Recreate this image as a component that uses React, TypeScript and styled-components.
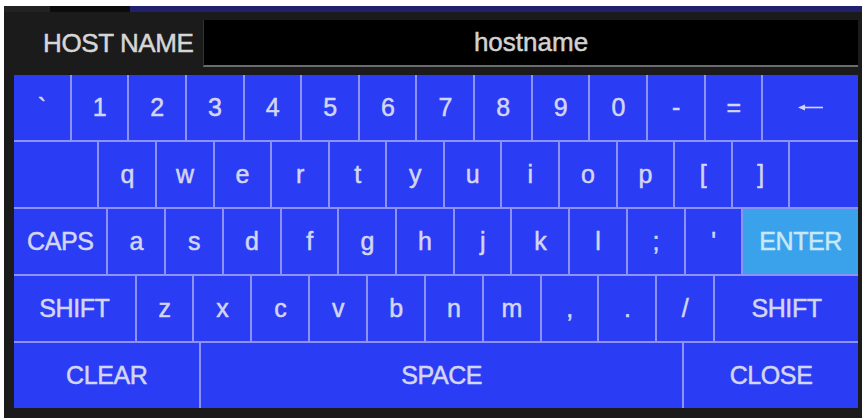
import { FC } from 'react';
import styled, { createGlobalStyle } from 'styled-components';

const COLOR = {
  FRAME: '#1b1b1b',
  KEY: '#2b3df4',
  KEY_LINE: '#8d92f6',
  KEY_TEXT: '#d3d6f2',
  ENTER: '#3aa2ea',
  ENTER_TEXT: '#c6e8f8',
};

interface KeyDef {
  label?: string;
  grow?: number;
  accent?: boolean;
  icon?: 'back';
}

const k = (label: string, grow = 1, accent = false): KeyDef => ({ label, grow, accent });

const ROWS: KeyDef[][] = [
  [
    ...['`', '1', '2', '3', '4', '5', '6', '7', '8', '9', '0', '-', '='].map((c) => k(c)),
    { icon: 'back', grow: 1.7 },
  ],
  [k('', 1.5), ...'qwertyuiop[]'.split('').map((c) => k(c)), k('', 1.22)],
  [k('CAPS', 1.66), ...'asdfghjkl;\''.split('').map((c) => k(c)), k('ENTER', 2.06, true)],
  [k('SHIFT', 2.16), ...'zxcvbnm,./'.split('').map((c) => k(c)), k('SHIFT', 2.56)],
  [k('CLEAR', 3.25), k('SPACE', 8.43), k('CLOSE', 3.05)],
];

const BackArrow: FC = () => (
  <svg width="27" height="9" viewBox="0 0 27 9">
    <path d="M7 4.5 H26" stroke={COLOR.KEY_TEXT} strokeWidth="1.6" />
    <path d="M1 4.5 L8 1.5 L8 7.5 Z" fill={COLOR.KEY_TEXT} />
  </svg>
);

const App: FC = () => (
  <>
    <GlobalStyle />
    <Frame>
      <TopStrip />
      <Header>
        <Label>HOST NAME</Label>
        <NameField>hostname</NameField>
      </Header>
      <Keyboard>
        {ROWS.map((row, i) => (
          <Row key={i}>
            {row.map((key, j) => (
              <Key key={j} $grow={key.grow} $accent={key.accent}>
                {key.icon === 'back' ? <BackArrow /> : key.label}
              </Key>
            ))}
          </Row>
        ))}
      </Keyboard>
    </Frame>
  </>
);

const GlobalStyle = createGlobalStyle`
  html, body {
    margin: 0;
    padding: 0;
    background: #fff;
    overflow: hidden;
  }
  body {
    font-family: "Liberation Sans", Arial, sans-serif;
  }
`;

const Frame = styled.div`
  margin: 6px 0 0 4px;
  width: 858px;
  height: 412px;
  box-sizing: border-box;
  padding: 0 4px 10px 10px;
  background: ${COLOR.FRAME};
  display: flex;
  flex-direction: column;
`;

/* Thin navy band along the top edge */
const TopStrip = styled.div`
  height: 6px;
  margin: 0 -4px 0 -10px;
  background: linear-gradient(to right, #222 0 46px, #0c0c0c 46px 126px, #20206c 126px);
`;

const Header = styled.div`
  display: flex;
  align-items: center;
  height: 63px;
  box-sizing: border-box;
  padding: 8px 0;
`;

const Label = styled.div`
  flex: none;
  width: 189px;
  box-sizing: border-box;
  padding-left: 29px;
  color: #d6d6d6;
  font-size: 26px;
  letter-spacing: -0.4px;
  -webkit-text-stroke: 0.5px #d6d6d6;
`;

const NameField = styled.div`
  flex: 1;
  height: 47px;
  box-sizing: border-box;
  display: flex;
  align-items: center;
  justify-content: center;
  background: #000;
  border-left: 1px solid #333;
  border-bottom: 2px solid #6c6c6c;
  color: #d2d2d2;
  font-size: 26px;
  -webkit-text-stroke: 0.5px #d2d2d2;
`;

const Keyboard = styled.div`
  flex: 1;
  display: flex;
  flex-direction: column;
  gap: 2px;
  background: ${COLOR.KEY_LINE};
`;

const Row = styled.div`
  flex: 1;
  display: flex;
  gap: 2px;
`;

const Key = styled.div<{ $grow?: number; $accent?: boolean }>`
  flex: ${(p) => p.$grow ?? 1} 1 0;
  min-width: 0;
  display: flex;
  align-items: center;
  justify-content: center;
  background: ${(p) => (p.$accent ? COLOR.ENTER : COLOR.KEY)};
  color: ${(p) => (p.$accent ? COLOR.ENTER_TEXT : COLOR.KEY_TEXT)};
  font-size: 25px;
  letter-spacing: -0.4px;
  -webkit-text-stroke: 0.5px ${(p) => (p.$accent ? COLOR.ENTER_TEXT : COLOR.KEY_TEXT)};
`;

export default App;
